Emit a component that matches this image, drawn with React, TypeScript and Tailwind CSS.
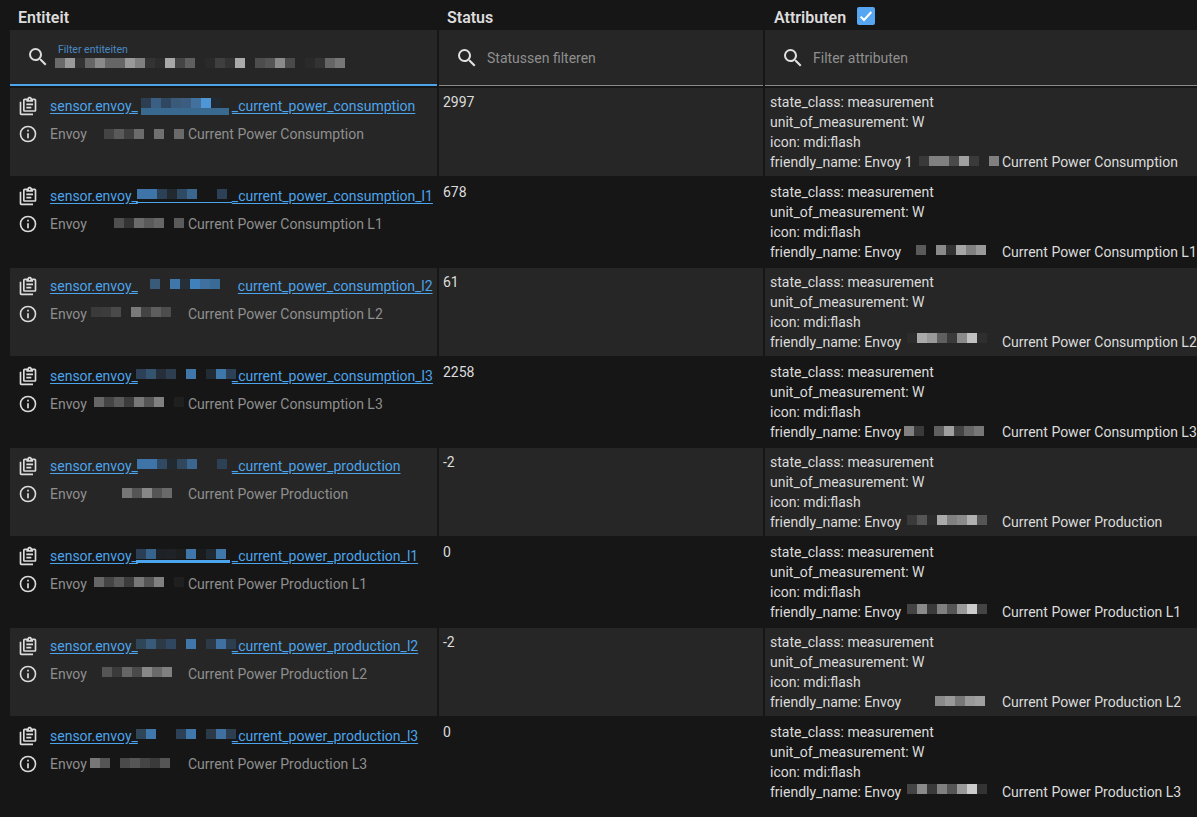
const CLIPBOARD =
  "M4 7V21H18V23H4C2.9 23 2 22.1 2 21V7H4M20 3C21.1 3 22 3.9 22 5V17C22 18.1 21.1 19 20 19H8C6.9 19 6 18.1 6 17V5C6 3.9 6.9 3 8 3H11.18C11.6 1.84 12.7 1 14 1C15.3 1 16.4 1.84 16.82 3H20M14 3C13.45 3 13 3.45 13 4C13 4.55 13.45 5 14 5C14.55 5 15 4.55 15 4C15 3.45 14.55 3 14 3M10 7V5H8V17H20V5H18V7H10M18 11H10V9H18V11M16 15H10V13H16V15Z";
const INFO =
  "M11,9H13V7H11M12,20C7.59,20 4,16.41 4,12C4,7.59 7.59,4 12,4C16.41,4 20,7.59 20,12C20,16.41 16.41,20 12,20M12,2A10,10 0 0,0 2,12A10,10 0 0,0 12,22A10,10 0 0,0 22,12A10,10 0 0,0 12,2M11,17H13V11H11V17Z";
const MAGNIFY =
  "M9.5,3A6.5,6.5 0 0,1 16,9.5C16,11.11 15.41,12.59 14.44,13.73L14.71,14H15.5L20.5,19L19,20.5L14,15.5V14.71L13.73,14.44C12.59,15.41 11.11,16 9.5,16A6.5,6.5 0 0,1 3,9.5A6.5,6.5 0 0,1 9.5,3M9.5,5C7,5 5,7 5,9.5C5,12 7,14 9.5,14C12,14 14,12 14,9.5C14,7 12,5 9.5,5Z";

function Icon({ d, size }: { d: string; size: number }) {
  return (
    <svg viewBox="0 0 24 24" width={size} height={size} fill="currentColor" className="shrink-0">
      <path d={d} />
    </svg>
  );
}

// blurred-out pieces of the screenshot: x is relative to the row, y too
type Mask = { x: number; y: number; cells: string[] };
type Rule = { x: number; y: number; w: number; h: number; color: string };

function Masks({ masks, rules = [] }: { masks: Mask[]; rules?: Rule[] }) {
  return (
    <>
      {masks.map((m, i) => (
        <div key={i} className="absolute flex h-[10px]" style={{ left: m.x, top: m.y }}>
          {m.cells.map((c, j) => (
            <span key={j} className="h-[10px] w-[10px]" style={{ backgroundColor: c || "transparent" }} />
          ))}
        </div>
      ))}
      {rules.map((r, i) => (
        <div
          key={i}
          className="absolute"
          style={{ left: r.x, top: r.y, width: r.w, height: r.h, backgroundColor: r.color }}
        />
      ))}
    </>
  );
}

type Row = {
  suffix: string;
  gap: number;
  name: string;
  state: string;
  envoy?: string;
  masks: Mask[];
  rules?: Rule[];
};

const rows: Row[] = [
  {
    suffix: "_current_power_consumption",
    gap: 94,
    name: "Current Power Consumption",
    state: "2997",
    envoy: "Envoy 1",
    masks: [
      { x: 131, y: 10, cells: ["#2c3e50", "#3a5f82", "#2f4760", "#3a5a7a", "#3c5d80", "#41719c", "#4f96d6", "#212a33"] },
      { x: 94, y: 41, cells: ["#444444", "#5a5a5a", "#3f3f3f", "#6b6b6b", "", "#707070", "", "#6a6a6a"] },
      { x: 909, y: 68, cells: ["#393939", "#808080", "#808080", "#4a4a4a", "#a0a0a0", "#3a3a3a", "", "#808080"] },
    ],
    rules: [{ x: 131, y: 20, w: 88, h: 7, color: "#39698f" }],
  },
  {
    suffix: "_current_power_consumption_l1",
    gap: 94,
    name: "Current Power Consumption L1",
    state: "678",
    masks: [
      { x: 127, y: 11, cells: ["#3f74a8", "#3f74a8", "#2c4156", "#22292f", "#2f4a62", "#3a6690", "", "", "#2c4156"] },
      { x: 104, y: 40, cells: ["#4f4f4f", "#333333", "#6b6b6b", "#5a5a5a", "#666666", "", "#5a5a5a"] },
      { x: 906, y: 67, cells: ["#5a5a5a", "", "#8a8a8a", "#333333", "#a5a5a5", "#808080", "#999999"] },
    ],
    rules: [{ x: 126, y: 24, w: 96, h: 1, color: "#4ca4ec" }],
  },
  {
    suffix: "current_power_consumption_l2",
    gap: 100,
    name: "Current Power Consumption L2",
    state: "61",
    masks: [
      { x: 140, y: 11, cells: ["#3a5a7a", "", "#3f77ab", "#252f38", "#4080bb", "#3f70a0", "#3a6a96"] },
      { x: 81, y: 39, cells: ["#3a3a3a", "#3c3c3c", "#4a4a4a", "", "#7a7a7a", "#444444", "#5e5e5e", "#4d4d4d"] },
      { x: 897, y: 65, cells: ["#2c2c2c", "#aaaaaa", "#999999", "#5f5f5f", "#3a3a3a", "#8a8a8a", "#c0c0c0", "#2e2e2e"] },
    ],
  },
  {
    suffix: "_current_power_consumption_l3",
    gap: 94,
    name: "Current Power Consumption L3",
    state: "2258",
    masks: [
      { x: 126, y: 11, cells: ["#2c4158", "#34536f", "#262f39", "#2c3e50", "", "#3f77ab", "", "#212c35", "#3f77ab", "#2c4156"] },
      { x: 84, y: 39, cells: ["#666666", "#444444", "#5a5a5a", "#3c3c3c", "#777777", "#555555", "#808080", "", "#1f1f1f"] },
      { x: 894, y: 68, cells: ["#808080", "#3a3a3a", "", "#5f5f5f", "#a0a0a0", "#444444", "#666666", "#777777"] },
    ],
  },
  {
    suffix: "_current_power_production",
    gap: 94,
    name: "Current Power Production",
    state: "-2",
    masks: [
      { x: 127, y: 11, cells: ["#3f74a8", "#3f74a8", "#2f4a62", "#222a31", "#31475c", "#3a6690", "", "", "#2c4156"] },
      { x: 112, y: 40, cells: ["#777777", "#555555", "#888888", "#555555", "#6a6a6a"] },
      { x: 897, y: 67, cells: ["#3a3a3a", "#555555", "#2c2c2c", "#aaaaaa", "#808080", "#8a8a8a", "#b0b0b0", "#555555"] },
    ],
  },
  {
    suffix: "_current_power_production_l1",
    gap: 94,
    name: "Current Power Production L1",
    state: "0",
    masks: [
      { x: 126, y: 11, cells: ["#2a3f55", "#36648c", "#1e2226", "#1f2226", "#1c1e20", "#3f77ab", "#191b1d", "#1f2a33", "#3f77ab"] },
      { x: 84, y: 39, cells: ["#666666", "#444444", "#5a5a5a", "#3c3c3c", "#777777", "#555555", "#808080", "", "#1f1f1f"] },
      { x: 897, y: 66, cells: ["#444444", "#8a8a8a", "#3a3a3a", "#808080", "#555555", "#999999", "#cccccc", "#444444"] },
    ],
    rules: [{ x: 126, y: 22, w: 94, h: 3, color: "#4ca4ec" }],
  },
  {
    suffix: "_current_power_production_l2",
    gap: 94,
    name: "Current Power Production L2",
    state: "-2",
    masks: [
      { x: 126, y: 11, cells: ["#2f4558", "#3a5a7a", "#2c3a47", "#2f4760", "", "#3f77ab", "", "#2c3a47", "#3f70a0", "#2c3e50"] },
      { x: 92, y: 39, cells: ["#555555", "#3a3a3a", "#666666", "#4a4a4a", "#888888", "#6a6a6a", "#808080"] },
      { x: 925, y: 68, cells: ["#8a8a8a", "#999999", "#777777", "#999999", "#a0a0a0"] },
    ],
  },
  {
    suffix: "_current_power_production_l3",
    gap: 94,
    name: "Current Power Production L3",
    state: "0",
    masks: [
      { x: 126, y: 11, cells: ["#2f4558", "#3f77ab", "", "", "#2c4156", "#3f77ab", "", "#2c3a47", "#3f70a0", "#2c3e50"] },
      { x: 80, y: 40, cells: ["#777777", "#555555", "", "#4a4a4a", "#555555", "#444444", "#3a3a3a", "#555555"] },
      { x: 897, y: 66, cells: ["#444444", "#8a8a8a", "#3a3a3a", "#808080", "#555555", "#999999", "#cccccc", "#333333"] },
    ],
  },
];

const filterCells = [
  "#6a6a6a", "#9a9a9a", "#333333", "#666666", "#8a8a8a", "#666666", "#666666", "#999999", "#808080", "#333333",
  "#2c2c2c", "#a8a8a8", "#444444", "#5f5f5f", "", "#2a2a2a", "#3f3f3f", "#333333", "#aaaaaa", "",
  "#4d4d4d", "#555555", "#8a8a8a", "#4a4a4a", "", "#2a2a2a", "#333333", "#666666", "#777777",
];

function Filter({ placeholder }: { placeholder: string }) {
  return (
    <div className="flex h-[56px] items-center gap-[8px] border-b border-[#8a8a8a] bg-[#262626] pl-[16px] text-[#e1e1e1]">
      <Icon d={MAGNIFY} size={24} />
      <span className="text-[14px] text-[#8f8f8f]">{placeholder}</span>
    </div>
  );
}

export default function App() {
  return (
    <div
      className="h-screen w-full overflow-hidden bg-[#161616] pl-[10px] text-[14px] leading-[20px] text-[#dcdcdc]"
      style={{ fontFamily: "Roboto, sans-serif" }}
    >
      <div className="grid grid-cols-[427px_324px_432px] gap-x-[2px]">
        <div className="h-[30px] pl-[8px] pt-[8px] text-[16px] font-semibold">Entiteit</div>
        <div className="h-[30px] pl-[8px] pt-[8px] text-[16px] font-semibold">Status</div>
        <div className="flex h-[30px] gap-[11px] pl-[9px] text-[16px] font-semibold">
          <span className="pt-[8px]">Attributen</span>
          <span className="mt-[7px] flex h-[18px] w-[18px] items-center justify-center rounded-[2px] bg-[#56a6f2] text-white">
            <svg viewBox="0 0 24 24" width="16" height="16" fill="none" stroke="currentColor" strokeWidth="3">
              <path d="M4 13l5 5L20 6" />
            </svg>
          </span>
        </div>

        <div className="relative flex h-[56px] items-center gap-[8px] border-b-2 border-[#4ca4ec] bg-[#262626] pl-[16px]">
          <Icon d={MAGNIFY} size={24} />
          <span className="absolute left-[48px] top-[14px] text-[10.5px] leading-[12px] text-[#4a8ac4]">Filter entiteiten</span>
          <Masks masks={[{ x: 45, y: 28, cells: filterCells }]} />
        </div>
        <Filter placeholder="Statussen filteren" />
        <Filter placeholder="Filter attributen" />
      </div>

      <div className="mt-[2px] flex flex-col gap-[2px]">
        {rows.map((row, i) => (
          <div
            key={i}
            className={`relative grid h-[88px] grid-cols-[427px_324px_432px] gap-x-[2px] ${i % 2 === 0 ? "[&>div]:bg-[#262626]" : ""}`}
          >
            <div className="flex flex-col gap-[4px] pl-[8px] pt-[6px]">
              <div className="flex h-[24px] items-center gap-[12px]">
                <Icon d={CLIPBOARD} size={20} />
                <a className="whitespace-nowrap text-[#4ca4ec] underline underline-offset-[2px]" href="#">
                  sensor.envoy_
                  <span className="inline-block" style={{ width: row.gap }} />
                  {row.suffix}
                </a>
              </div>
              <div className="flex h-[24px] items-center gap-[12px]">
                <Icon d={INFO} size={20} />
                <span className="flex whitespace-nowrap text-[#8f8f8f]">
                  <span className="w-[138px] shrink-0">Envoy</span>
                  {row.name}
                </span>
              </div>
            </div>
            <div className="pl-[4px] pt-[4px]">{row.state}</div>
            <div className="whitespace-nowrap pl-[5px] pt-[4px]">
              <div>state_class: measurement</div>
              <div>unit_of_measurement: W</div>
              <div>icon: mdi:flash</div>
              <div className="flex">
                <span className="w-[232px] shrink-0">friendly_name: {row.envoy ?? "Envoy"}</span>
                {row.name}
              </div>
            </div>
            <Masks masks={row.masks} rules={row.rules} />
          </div>
        ))}
      </div>
    </div>
  );
}
